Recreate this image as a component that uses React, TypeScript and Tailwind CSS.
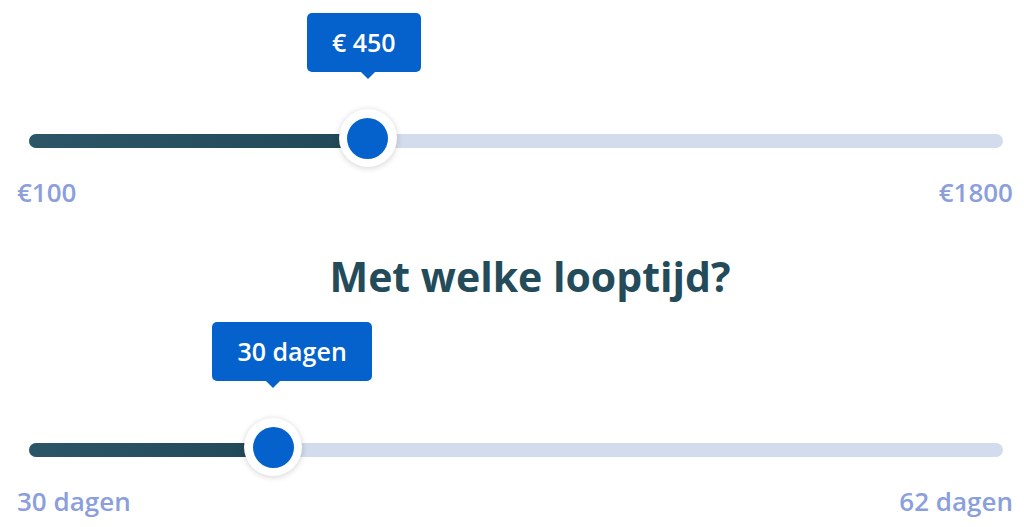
import React from "react";

type SliderProps = {
  value: string;
  percent: number;
  min: string;
  max: string;
};

function Slider({ value, percent, min, max }: SliderProps) {
  return (
    <div>
      <div className="pl-[29px] pr-[21px]">
        <div className="relative h-[14px] rounded-full bg-[#d3dcec]">
          <div
            className="absolute left-0 top-0 h-full rounded-l-full bg-gradient-to-r from-[#2b5667] to-[#224857]"
            style={{ width: `${percent}%` }}
          />
          <div
            className="absolute top-[-3px] h-[14px] w-0"
            style={{ left: `${percent}%` }}
          >
            <div className="absolute bottom-[66px] left-[-61px] flex flex-col items-start">
              <div className="flex h-[59px] items-center whitespace-nowrap rounded-[5px] bg-[#0561cc] px-[25px] text-[25px] font-semibold text-white">
                {value}
              </div>
              <div className="ml-[54px] h-0 w-0 border-x-[7px] border-t-[7px] border-x-transparent border-t-[#0561cc]" />
            </div>
            <div className="absolute left-0 top-1/2 flex h-[58px] w-[58px] -translate-x-1/2 -translate-y-1/2 items-center justify-center rounded-full bg-white shadow-[0_1px_6px_rgba(0,0,0,0.18)]">
              <div className="h-[41px] w-[41px] rounded-full bg-[#0561cc]" />
            </div>
          </div>
        </div>
      </div>
      <div className="mt-[29px] flex justify-between pl-[17px] pr-[11px] text-[26px] font-semibold leading-[30px] text-[#8b9fdc]">
        <span>{min}</span>
        <span>{max}</span>
      </div>
    </div>
  );
}

export default function App() {
  return (
    <div
      className="h-[527px] w-[1024px] overflow-hidden bg-white"
      style={{ fontFamily: '"Open Sans", "Noto Sans", sans-serif' }}
    >
      <div className="pt-[134px]">
        <Slider value="€ 450" percent={34.8} min="€100" max="€1800" />
      </div>
      <h2 className="mt-[45px] pl-[36px] text-center text-[41px] font-bold leading-[48px] text-[#234b5a]">
        Met welke looptijd?
      </h2>
      <div className="pt-[143px]">
        <Slider value="30 dagen" percent={25.1} min="30 dagen" max="62 dagen" />
      </div>
    </div>
  );
}
